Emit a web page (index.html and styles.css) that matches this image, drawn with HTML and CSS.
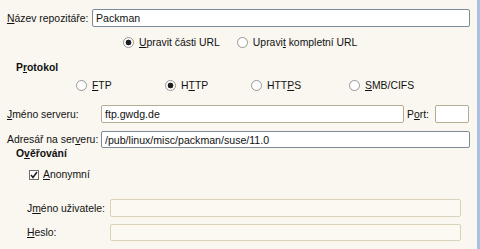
FILE: index.html
```html
<!DOCTYPE html>
<html lang="cs">
<head>
    <meta charset="UTF-8" />
    <title>Repozitář</title>
    <link rel="stylesheet" href="styles.css">
</head>
<body>
<div class="panel">
    <div class="row row-name">
        <label class="lbl" for="repoName"><u>N</u>ázev repozitáře:</label>
        <input type="text" id="repoName" class="field field-active" value="Packman" />
    </div>

    <div class="url-mode">
        <label class="opt"><input type="radio" name="mode" checked /> <span><u>U</u>pravit části URL</span></label>
        <label class="opt"><input type="radio" name="mode" /> <span>Upravi<u>t</u> kompletní URL</span></label>
    </div>

    <div class="group-title">P<u>r</u>otokol</div>

    <div class="proto">
        <label class="opt proto-ftp"><input type="radio" name="proto" /> <span><u>F</u>TP</span></label>
        <label class="opt proto-http"><input type="radio" name="proto" checked /> <span>H<u>T</u>TP</span></label>
        <label class="opt proto-https"><input type="radio" name="proto" /> <span>HTT<u>P</u>S</span></label>
        <label class="opt"><input type="radio" name="proto" /> <span><u>S</u>MB/CIFS</span></label>
    </div>

    <div class="row row-server">
        <label class="lbl lbl-wide" for="server"><u>J</u>méno serveru:</label>
        <input type="text" id="server" class="field field-soft" value="ftp.gwdg.de" />
        <label class="port-lbl" for="port">P<u>o</u>rt:</label>
        <input type="text" id="port" class="field field-soft port" />
    </div>

    <div class="row row-dir">
        <label class="lbl lbl-wide" for="dir">Adresář na ser<u>v</u>eru:</label>
        <input type="text" id="dir" class="field field-active" value="/pub/linux/misc/packman/suse/11.0" />
    </div>

    <div class="group-title auth-title">O<u>v</u>ěřování</div>

    <label class="check">
        <span class="box">
            <svg width="8" height="8" viewBox="0 0 8 8"><path d="M1 4 L3 6.5 L7 1" fill="none" stroke="#1a1a1a" stroke-width="1.5"/></svg>
        </span>
        <span><u>A</u>nonymní</span>
    </label>

    <div class="row row-user">
        <label class="lbl lbl-auth">J<u>m</u>éno uživatele:</label>
        <input type="text" class="field field-off" disabled />
    </div>

    <div class="row row-pass">
        <label class="lbl lbl-auth"><u>H</u>eslo:</label>
        <input type="password" class="field field-off" disabled />
    </div>
</div>
</body>
</html>
```

FILE: styles.css
```css
* {
    box-sizing: border-box;
    margin: 0;
    padding: 0;
}

body {
    width: 480px;
    height: 249px;
    overflow: hidden;
    background: #f9f7f0;
    color: #111;
    font-family: 'Liberation Sans', Arial, sans-serif;
    font-size: 10.4px;
    line-height: 13px;
    white-space: nowrap;
}

.panel {
    height: 249px;
    padding: 9px 7px 0 7px;
    border-right: 3px solid #a9c0e2;
    display: flex;
    flex-direction: column;
}

u {
    text-decoration-thickness: 1px;
    text-underline-offset: 1px;
}

.row {
    display: flex;
    align-items: center;
}

.lbl {
    width: 85px;
    flex: none;
}

.lbl-wide {
    width: 94px;
}

.lbl-auth {
    width: 103px;
    padding-left: 20px;
}

.field {
    flex: 1;
    height: 18px;
    min-width: 0;
    border: 1px solid #7d8b98;
    border-radius: 2px;
    background: #fff;
    padding: 0 3px;
    font-family: inherit;
    font-size: 10.6px;
    color: #111;
    outline: none;
}

.field-soft {
    border-color: #b4ad94;
}

.field-off {
    border-color: #dad2b9;
    background: #fbf9f2;
    margin-right: 9px;
}

.row-dir .field {
    height: 17px;
}

.url-mode {
    display: flex;
    gap: 17px;
    margin-top: 9px;
    padding-left: 116px;
}

.opt {
    display: flex;
    align-items: center;
    gap: 5px;
}

input[type="radio"] {
    appearance: none;
    width: 11px;
    height: 11px;
    border: 1px solid #969696;
    border-radius: 50%;
    background: #fff;
    flex: none;
}

input[type="radio"]:checked {
    background: radial-gradient(circle, #1e1e1e 0 2.6px, #fff 3.2px);
}

.group-title {
    font-weight: bold;
    margin-top: 12px;
    padding-left: 9px;
}

.proto {
    display: flex;
    margin-top: 5px;
    padding-left: 69px;
}

.proto-ftp {
    width: 89px;
}

.proto-http {
    width: 86px;
}

.proto-https {
    width: 98px;
}

.row-server {
    margin-top: 13px;
}

.port-lbl {
    margin: 0 6px 0 3px;
}

.port {
    flex: none;
    width: 34px;
    margin-right: 1px;
}

.row-dir {
    margin-top: 8px;
}

.auth-title {
    margin-top: 0;
    line-height: 12px;
}

.check {
    display: flex;
    align-items: center;
    gap: 4px;
    margin-top: 8px;
    padding-left: 22px;
}

.box {
    width: 10px;
    height: 10px;
    border: 1px solid #6e6e6e;
    background: #fff;
    display: flex;
    align-items: center;
    justify-content: center;
}

.row-user {
    margin-top: 18px;
}

.row-pass {
    margin-top: 7px;
}

.row-pass .field {
    height: 17px;
}
```
